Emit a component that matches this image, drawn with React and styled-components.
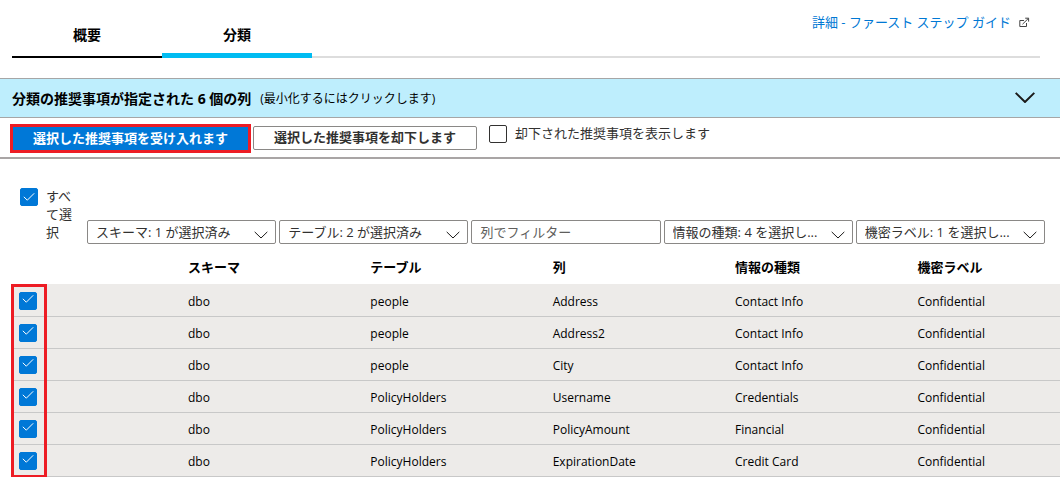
import React, { useState } from "react";
import styled, { createGlobalStyle } from "styled-components";

const GlobalStyle = createGlobalStyle`
  * { box-sizing: border-box; }
  body {
    margin: 0;
    background: #fff;
    color: #000;
    font-family: "Open Sans", "Noto Sans CJK JP", sans-serif;
    font-size: 13px;
    line-height: 18px;
  }
  button, input, select { font: inherit; margin: 0; }
`;

const Header = styled.header`
  display: flex;
  height: 58px;
  margin: 0 20px 20px 12px;
`;

const TabList = styled.div`
  display: flex;
`;

const Tab = styled.button`
  display: flex;
  justify-content: center;
  align-items: flex-start;
  width: 150px;
  padding: 25px 0 0;
  border: 0;
  border-bottom: ${(p) => (p.$active ? "5px solid #00bcf2" : "2px solid #000")};
  background: none;
  color: #000;
  font-size: 14px;
  font-weight: 700;
  line-height: 20px;
`;

const HeaderRest = styled.div`
  flex: 1;
  display: flex;
  justify-content: flex-end;
  align-items: flex-start;
  padding: 13px 10px 0 0;
  border-bottom: 2px solid #ddd;
`;

const GuideLink = styled.a`
  display: flex;
  align-items: center;
  gap: 8px;
  color: #0078d4;
  text-decoration: none;
`;

const Banner = styled.button`
  display: flex;
  align-items: center;
  width: 100%;
  height: 40px;
  padding: 2px 25px 0 12px;
  border: 0;
  border-top: 1px solid #a6a6a6;
  border-bottom: 1px solid #a6a6a6;
  background: #beeefd;
  color: #000;
  text-align: left;

  svg { margin-bottom: 4px; }
`;

const BannerTitle = styled.span`
  font-size: 14px;
  font-weight: 700;
  line-height: 20px;
`;

const BannerHint = styled.span`
  flex: 1;
  margin-left: 9px;
  font-size: 12px;
  line-height: 20px;
`;

const Toolbar = styled.div`
  display: flex;
  align-items: flex-start;
  padding: 6px 10px 4px;
  border-bottom: 2px solid #a9a5a5;
`;

const Highlight = styled.div`
  margin-right: 2px;
  border: 3px solid #ed1c24;
`;

const ActionButton = styled.button`
  display: block;
  height: ${(p) => (p.$primary ? "23px" : "24px")};
  margin-top: ${(p) => (p.$primary ? "0" : "2px")};
  padding: 0 20px 2px;
  border: ${(p) => (p.$primary ? "0" : "1px solid #8a8886")};
  border-radius: ${(p) => (p.$primary ? "0" : "2px")};
  background: ${(p) => (p.$primary ? "#0078d7" : "#fff")};
  color: ${(p) => (p.$primary ? "#fff" : "#323130")};
  font-weight: 700;
  line-height: 20px;
`;

const CheckLabel = styled.label`
  display: flex;
  align-items: flex-start;
  gap: 8px;
  color: #323130;
`;

const RejectedOption = styled.div`
  margin-left: 12px;
`;

const CheckFrame = styled.span`
  display: inline-block;
  position: relative;
  flex: none;
  width: 18px;
  height: 18px;
  margin-top: ${(p) => (p.$raised ? "0" : "1px")};

  svg {
    position: absolute;
    left: 3px;
    top: ${(p) => (p.$raised ? "2px" : "4px")};
    pointer-events: none;
  }
`;

const CheckInput = styled.input`
  appearance: none;
  display: block;
  width: 18px;
  height: 18px;
  border: 1px solid #323130;
  border-radius: 2px;
  background: #fff;

  &:checked {
    border-color: #0078d7;
    background: #0078d7;
  }
`;

const FilterBar = styled.div`
  display: flex;
  align-items: flex-end;
  padding: 28px 15px 0 20px;
`;

const SelectAll = styled.div`
  flex: none;
  width: 67px;
  height: 57px;
  padding-right: 13px;
`;

const Filters = styled.div`
  flex: 1;
  display: grid;
  grid-template-columns: repeat(5, 1fr);
  gap: 3px;
`;

const SelectBox = styled.div`
  position: relative;

  svg {
    position: absolute;
    right: 8px;
    top: 11px;
    pointer-events: none;
  }
`;

const FilterSelect = styled.select`
  appearance: none;
  display: block;
  width: 100%;
  height: 24px;
  padding: 0 24px 0 8px;
  border: 1px solid #8a8886;
  border-radius: 2px;
  background: #fff;
  color: #323130;
`;

const FilterInput = styled.input`
  width: 100%;
  height: 24px;
  padding: 0 8px;
  border: 1px solid #8a8886;
  border-radius: 2px;
  color: #323130;

  &::placeholder { color: #605e5c; opacity: 1; }
`;

const TableArea = styled.main`
  position: relative;
  margin: 6px 0 0 12px;
`;

const SelectionOutline = styled.div`
  position: absolute;
  left: -1px;
  top: 34px;
  bottom: -1px;
  width: 36px;
  border: 3px solid #ed1c24;
  pointer-events: none;
`;

const Table = styled.table`
  width: 100%;
  table-layout: fixed;
  border-spacing: 0;
`;

const CheckCol = styled.col`
  width: 176px;
`;

const DataCol = styled.col`
  width: 17.4%;
`;

const HeadCell = styled.th`
  height: 35px;
  padding: 0;
  border-bottom: 1px solid #edebe9;
  text-align: left;
  font-weight: 700;
`;

const Cell = styled.td`
  height: 32px;
  padding: ${(p) => (p.$check ? "0 7px" : "2px 0 0")};
  border-bottom: 1px solid #c8c8c8;
  background: #edebe9;
  font-size: 12px;
  line-height: 18px;

  ${CheckFrame} { display: block; }
`;

function Chevron({ width, height, weight = 1 }) {
  return (
    <svg width={width} height={height} viewBox={`0 0 ${width} ${height}`} fill="none" stroke="#1b1a19" strokeWidth={weight} aria-hidden="true">
      <path d={`M0.7 0.9 L${width / 2} ${height - 1} L${width - 0.7} 0.9`} />
    </svg>
  );
}

function OpenIcon() {
  return (
    <svg width="11" height="11" viewBox="0 0 11 11" fill="none" stroke="#444" aria-hidden="true">
      <path d="M5 3.5H0.8V9.5H7.5V6M3.5 7.2L9.4 1.4M6.2 1.2H9.6V4.6" />
    </svg>
  );
}

function Checkbox({ raised, initial, id, label }) {
  const [checked, setChecked] = useState(initial);
  return (
    <CheckFrame $raised={raised}>
      <CheckInput
        type="checkbox"
        id={id}
        aria-label={label}
        checked={checked}
        onChange={(e) => setChecked(e.target.checked)}
      />
      {checked && (
        <svg width="12" height="10" viewBox="0 0 12 10" fill="none" stroke="#fff" aria-hidden="true">
          <path d="M0.8 4.8L4.3 8.2L11.2 1.3" />
        </svg>
      )}
    </CheckFrame>
  );
}

function FilterDropdown({ label, text }) {
  return (
    <SelectBox>
      <FilterSelect aria-label={label}>
        <option>{text}</option>
      </FilterSelect>
      <Chevron width={14} height={8} />
    </SelectBox>
  );
}

const columns = ["スキーマ", "テーブル", "列", "情報の種類", "機密ラベル"];

const rows = [
  ["dbo", "people", "Address", "Contact Info", "Confidential"],
  ["dbo", "people", "Address2", "Contact Info", "Confidential"],
  ["dbo", "people", "City", "Contact Info", "Confidential"],
  ["dbo", "PolicyHolders", "Username", "Credentials", "Confidential"],
  ["dbo", "PolicyHolders", "PolicyAmount", "Financial", "Confidential"],
  ["dbo", "PolicyHolders", "ExpirationDate", "Credit Card", "Confidential"],
];

export default function App() {
  return (
    <>
      <GlobalStyle />
      <Header>
        <TabList role="tablist">
          <Tab role="tab" aria-selected="false">概要</Tab>
          <Tab role="tab" aria-selected="true" $active>分類</Tab>
        </TabList>
        <HeaderRest>
          <GuideLink href="#guide">
            詳細 - ファースト ステップ ガイド
            <OpenIcon />
          </GuideLink>
        </HeaderRest>
      </Header>

      <Banner aria-expanded="true">
        <BannerTitle>分類の推奨事項が指定された 6 個の列</BannerTitle>
        <BannerHint>(最小化するにはクリックします)</BannerHint>
        <Chevron width={20} height={11} weight={2} />
      </Banner>

      <Toolbar>
        <Highlight>
          <ActionButton $primary>選択した推奨事項を受け入れます</ActionButton>
        </Highlight>
        <ActionButton>選択した推奨事項を却下します</ActionButton>
        <RejectedOption>
          <CheckLabel htmlFor="show-rejected">
            <Checkbox id="show-rejected" initial={false} />
            却下された推奨事項を表示します
          </CheckLabel>
        </RejectedOption>
      </Toolbar>

      <FilterBar>
        <SelectAll>
          <CheckLabel htmlFor="select-all">
            <Checkbox id="select-all" initial={true} />
            すべて選択
          </CheckLabel>
        </SelectAll>
        <Filters>
          <FilterDropdown label="スキーマ" text="スキーマ: 1 が選択済み" />
          <FilterDropdown label="テーブル" text="テーブル: 2 が選択済み" />
          <FilterInput type="text" aria-label="列" placeholder="列でフィルター" />
          <FilterDropdown label="情報の種類" text="情報の種類: 4 を選択し..." />
          <FilterDropdown label="機密ラベル" text="機密ラベル: 1 を選択し..." />
        </Filters>
      </FilterBar>

      <TableArea>
        <Table>
          <colgroup>
            <CheckCol />
            <DataCol />
            <DataCol />
            <DataCol />
            <DataCol />
            <col />
          </colgroup>
          <thead>
            <tr>
              <HeadCell as="td" />
              {columns.map((name) => (
                <HeadCell key={name} scope="col">{name}</HeadCell>
              ))}
            </tr>
          </thead>
          <tbody>
            {rows.map((row) => (
              <tr key={row[2]}>
                <Cell $check>
                  <Checkbox raised initial={true} label={row[2]} />
                </Cell>
                {row.map((value, i) => (
                  <Cell key={columns[i]}>{value}</Cell>
                ))}
              </tr>
            ))}
          </tbody>
        </Table>
        <SelectionOutline />
      </TableArea>
    </>
  );
}
